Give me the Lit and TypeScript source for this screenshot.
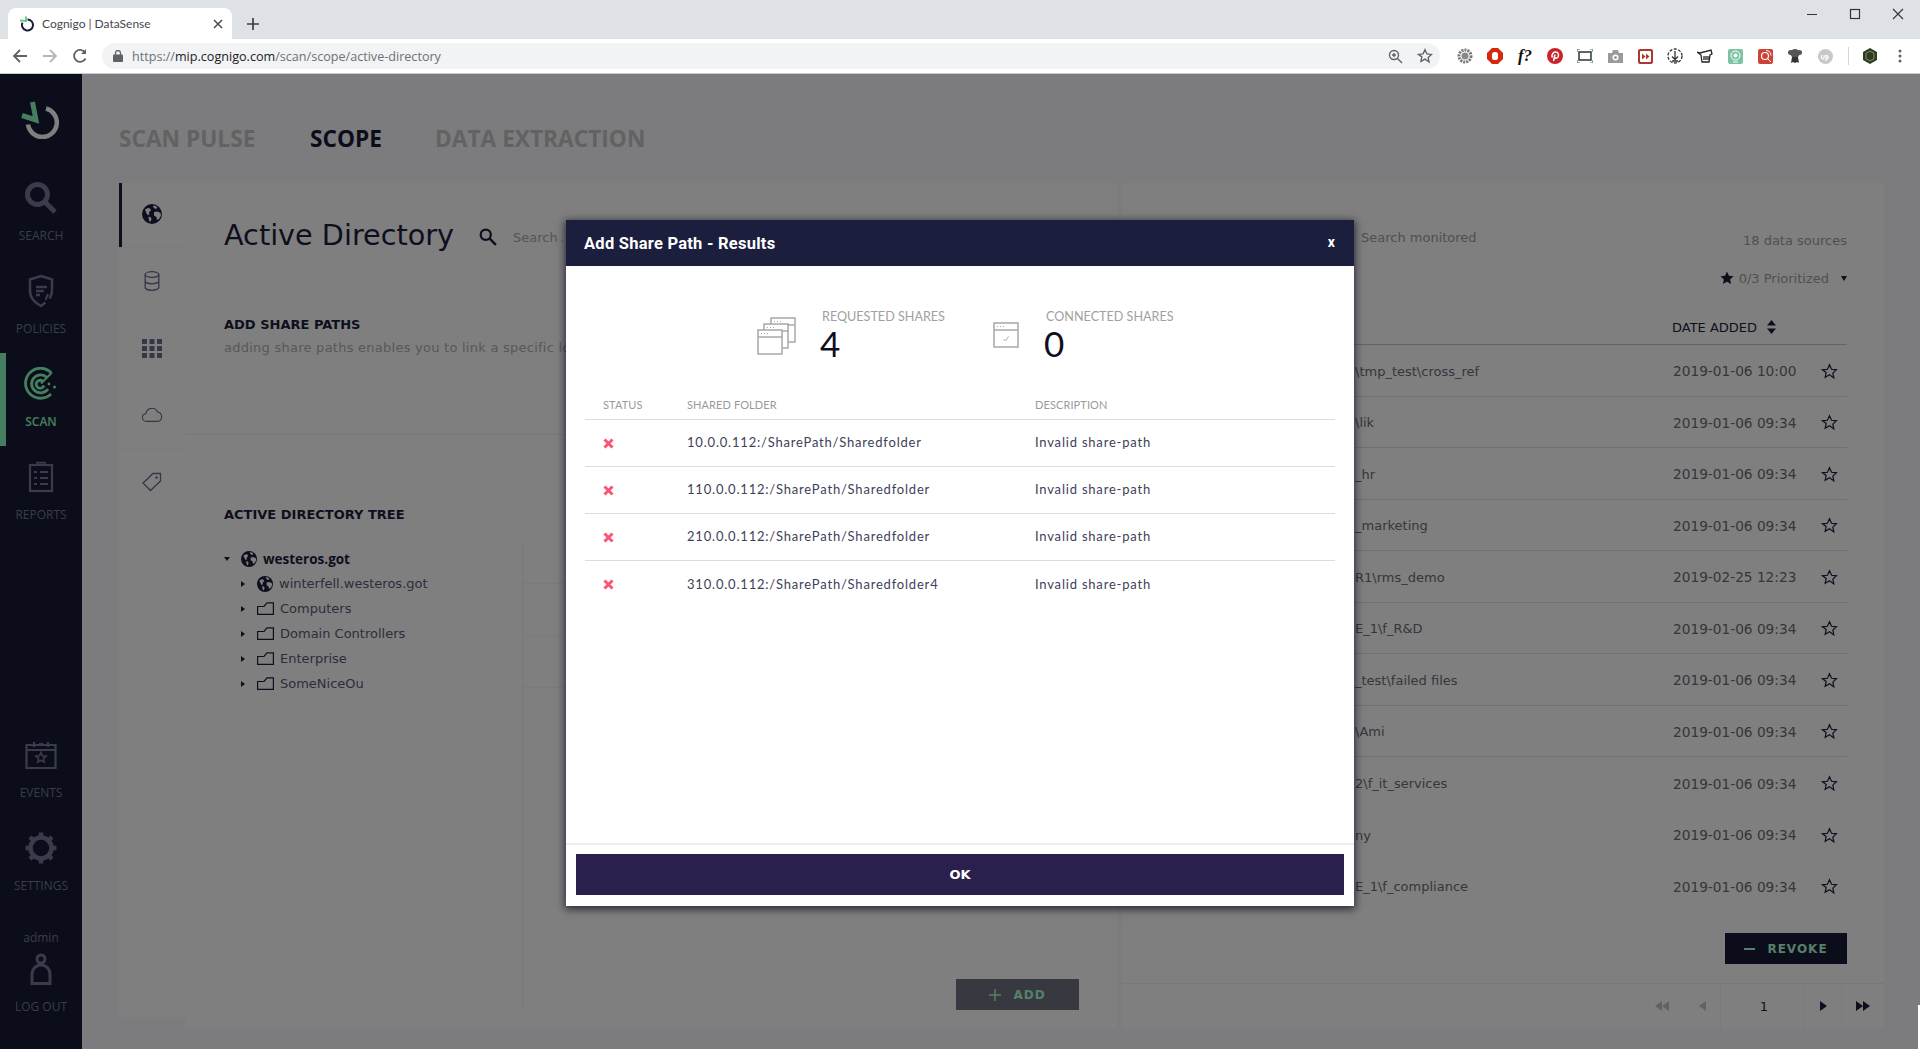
import {LitElement, html, css, svg} from 'lit';
import {customElement} from 'lit/decorators.js';

const globe = (size: number) => html`<svg width=${size} height=${size} viewBox="0 0 20 20">
  <circle cx="10" cy="10" r="10" fill="#1c1e3d"/>
  <path fill="#fff" d="M3 5.500l3-1.500 2 .5 1 2-2 1.500.5 2.500-2 .5-1.500-3zM11 1.500l3 .5 1.500 2-2 1-2-1.500zM12 8l3.500-.5 3 1.500.5 2.500-2 3.500-2 1-.5-3-2.500-1.500zM6.500 12.500l2.500 1 .5 2-1.500 2.500-1-1.500z"/>
</svg>`;

const folder = html`<svg class="folder" width="17" height="13" viewBox="0 0 17 13" fill="none" stroke="#1c1e3d" stroke-width="1.200">
  <path d="M.6 12.400V4.500h6.400L10 .8h6.400v11.600zM.6 4.500h1"/>
</svg>`;

const starOutline = html`<svg width="17" height="17" viewBox="0 0 24 24" fill="none" stroke="#1c1e3d" stroke-width="1.700">
  <path d="M12 2.500l2.900 6.300 6.900.8-5.100 4.700 1.400 6.800L12 16.700l-6.100 3.400 1.400-6.800L2.200 9.600l6.900-.8z"/>
</svg>`;

const windowIcon = (x: number, y: number) => svg`
  <rect x=${x} y=${y} width="24" height="24" fill="#fff" stroke="#a8a8a8" stroke-width="1.500"/>
  <path d="M${x} ${y + 7}h24" stroke="#a8a8a8" stroke-width="1.500"/>
  <path d="M${x + 3} ${y + 3.500}h1M${x + 6} ${y + 3.500}h1M${x + 9} ${y + 3.500}h1" stroke="#a8a8a8"/>`;

const navIcons: Record<string, unknown> = {
  SEARCH: html`<svg width="34" height="34" viewBox="0 0 34 34" fill="none" stroke="#74789a">
    <circle cx="13.500" cy="13.500" r="10" stroke-width="5"/><path d="M20 20l11 11" stroke-width="5"/></svg>`,
  POLICIES: html`<svg width="28" height="34" viewBox="0 0 28 34" fill="none" stroke="#74789a" stroke-width="2.500">
    <path d="M14 2l11 3.500v11c0 3-1 5.500-2.500 8M18.500 28.500L14 32C7 28 3 24 3 16.500v-11L14 2"/>
    <path d="M9 13h11M9 17h8M9 21h4"/><path d="M21 20l-2.500 6" stroke-width="2"/></svg>`,
  SCAN: html`<svg width="34" height="34" viewBox="0 0 34 34" fill="none" stroke="#8cffbe" stroke-width="2.800">
    <path d="M27 5.500A15 15 0 1 0 27 27"/><path d="M23 10.500A9 9 0 1 0 24 22"/><path d="M19.500 15A4 4 0 1 0 20 18.500"/>
    <path d="M17 16.500l11-11" stroke-width="2"/><circle cx="25" cy="17" r="1.400" fill="#8cffbe" stroke="none"/>
    <circle cx="30.500" cy="20" r="1.500" fill="#8cffbe" stroke="none"/></svg>`,
  REPORTS: html`<svg width="26" height="32" viewBox="0 0 26 32" fill="none" stroke="#74789a" stroke-width="2.200">
    <rect x="2" y="4" width="22" height="26"/><path d="M9 3.500h8V1.500H9z" stroke-width="1.500"/>
    <path d="M6 11h3M12 11h8M6 17h3M12 17h8M6 23h3M12 23h8" stroke-width="2.200"/></svg>`,
  EVENTS: html`<svg width="32" height="28" viewBox="0 0 32 28" fill="none" stroke="#74789a" stroke-width="2.200">
    <path d="M1.500 27V4h29v23zM1.500 9h29"/><path d="M9 1v5M23 1v5M14 3h4"/>
    <path d="M16 11.500l1.500 3.300 3.600.4-2.700 2.400.8 3.500-3.200-1.800-3.200 1.800.8-3.500-2.700-2.400 3.600-.4z" stroke-width="1.600"/></svg>`,
  SETTINGS: html`<svg width="32" height="32" viewBox="0 0 32 32" fill="none" stroke="#74789a">
    <circle cx="16" cy="16" r="10.500" stroke-width="4.500"/>
    <path d="M16 .5v5M16 26.500v5M.5 16h5M26.500 16h5M5 5l3.500 3.500M23.500 23.500L27 27M27 5l-3.500 3.500M8.500 23.500L5 27" stroke-width="4.500"/></svg>`,
};

const rows = [
  ['\\tmp_test\\cross_ref', '2019-01-06 10:00'],
  ['\\lik', '2019-01-06 09:34'],
  ['_hr', '2019-01-06 09:34'],
  ['_marketing', '2019-01-06 09:34'],
  ['R1\\rms_demo', '2019-02-25 12:23'],
  ['E_1\\f_R&D', '2019-01-06 09:34'],
  ['_test\\failed files', '2019-01-06 09:34'],
  ['\\Ami', '2019-01-06 09:34'],
  ['2\\f_it_services', '2019-01-06 09:34'],
  ['ny', '2019-01-06 09:34'],
  ['E_1\\f_compliance', '2019-01-06 09:34'],
];

const results = [
  '10.0.0.112:/SharePath/Sharedfolder',
  '110.0.0.112:/SharePath/Sharedfolder',
  '210.0.0.112:/SharePath/Sharedfolder',
  '310.0.0.112:/SharePath/Sharedfolder4',
];

@customElement('app-root')
export class AppRoot extends LitElement {

  static override styles = css`
    :host {
      display: block;
      position: relative;
      width: 1920px;
      height: 1049px;
      overflow: hidden;
      font-family: "DejaVu Sans", sans-serif;
      color: #1c1e3d;
      background: #f8f8ff;
    }

    /* browser chrome */
    .tabstrip {
      display: flex;
      align-items: flex-end;
      height: 39px;
      padding-left: 8px;
      background: #dee1e6;
      position: relative;
    }
    .tab {
      display: flex;
      align-items: center;
      width: 224px;
      height: 31px;
      box-sizing: border-box;
      padding: 0 9px 0 11px;
      background: #fff;
      border-radius: 8px 8px 0 0;
      font: 12px "Lato", sans-serif;
      color: #45484d;
    }
    .tab span { flex: 1; margin-left: 7px; }
    .newtab { margin: 0 0 9px 15px; }
    .winctl {
      display: flex;
      gap: 29px;
      margin-left: auto;
      align-self: flex-start;
      margin-top: 8px;
      padding-right: 15px;
    }
    .toolbar {
      display: flex;
      align-items: center;
      height: 34px;
      padding-left: 12px;
      background: #fff;
      border-bottom: 1px solid #c9cacc;
    }
    .navbtns { display: flex; gap: 14px; }
    .omnibox {
      display: flex;
      align-items: center;
      width: 1338px;
      height: 26px;
      margin-left: 14px;
      padding: 0 7px 0 11px;
      box-sizing: border-box;
      border-radius: 13px;
      background: #f1f3f4;
      font: 12.600px "Open Sans", sans-serif;
      color: #6e7175;
    }
    .omnibox .url { flex: 1; margin-left: 9px; }
    .omnibox b { font-weight: 400; color: #202124; }
    .omnibox .zoom { margin-right: 14px; }
    .exts { display: flex; align-items: center; margin-left: 10px; }
    .ext { display: flex; justify-content: center; align-items: center; width: 30px; height: 30px; font: italic bold 17px "Liberation Serif", serif; color: #111; }
    .sep { width: 1px; height: 18px; margin: 0 6px 0 8px; background: #d5d6d8; }

    /* app */
    .app { display: flex; height: 975px; }
    .nav {
      flex: none;
      width: 82px;
      display: flex;
      flex-direction: column;
      align-items: stretch;
      background: #161a34;
      color: #74789a;
      font: 12px "Open Sans", sans-serif;
      text-align: center;
    }
    .logo { display: flex; justify-content: center; height: 93px; padding: 27px 2px 0 0; box-sizing: border-box; }
    .nav-item {
      display: flex;
      flex-direction: column;
      align-items: center;
      height: 93px;
      box-sizing: border-box;
      padding-top: 12px;
    }
    .nav-item .ic { display: flex; align-items: center; justify-content: center; height: 38px; margin-bottom: 10px; }
    .nav-item.active { color: #8cffbe; border-left: 6px solid #8cffbe; padding-right: 6px; font-weight: 600; }
    .nav-gap { height: 185px; flex: none; }
    .user { display: flex; flex-direction: column; align-items: center; margin-top: 19px; }
    .user svg { margin: 7px 0 13px; }

    .main { flex: 1; padding: 48px 36px 0 37px; min-width: 0; }
    .htabs { display: flex; height: 34px; margin-bottom: 27px; font: 700 22.700px/34px "Open Sans", sans-serif; color: #c4c4c4; }
    .htabs div:nth-child(1) { width: 191px; }
    .htabs div:nth-child(2) { width: 125px; color: #161a34; }
    .content { display: flex; gap: 5px; }
    .leftgroup { display: flex; width: 998px; }
    .vtabs { flex: none; width: 66px; height: 834px; display: flex; flex-direction: column; gap: 1px; }
    .vtab { display: flex; align-items: center; justify-content: center; height: 66px; background: #fefefe; box-sizing: border-box; }
    .vtab.active { height: 64px; background: #fff; border-left: 3px solid #1c1e3d; padding: 0 3px 2px 0; }
    .vtab:last-child { flex: 1; align-items: flex-start; padding-top: 23px; }
    .panel { background: #fff; height: 845px; box-sizing: border-box; }
    .leftpanel { width: 932px; padding: 34px 38px 0 39px; }
    .titlerow { display: flex; align-items: center; height: 36px; }
    h1 { margin: 0; font: 400 28.700px/36px "DejaVu Sans", sans-serif; }
    .titlerow svg { margin: 4px 16px 0 25px; }
    .titlerow span { width: 50px; overflow: hidden; white-space: nowrap; font-size: 13px; color: #aaa; margin-top: 4px; }
    h2 { margin: 63px 0 0; font: 700 13px/18px "DejaVu Sans", sans-serif; }
    .desc { width: 342px; overflow: hidden; margin-top: 4px; font-size: 13px; line-height: 20px; letter-spacing: .25px; color: #b0b0b0; white-space: nowrap; }
    .divider { margin: 76px -38px 0 -39px; border-top: 1px solid #f0f0f0; }
    h2.tree-h { margin-top: 71px; }
    .treewrap { display: flex; height: 470px; margin-top: 16px; }
    .tree { flex: none; width: 298px; padding-top: 6px; font-size: 13px; color: #5c5a76; box-sizing: border-box; }
    .tnode { display: flex; align-items: center; height: 25px; padding-left: 16px; }
    .tnode.root { padding-left: 0; font: 700 13.500px "Open Sans", sans-serif; color: #1c1e3d; }
    .tnode .arr { width: 0; height: 0; margin: 0 12px 0 1px; border-left: 4px solid #1c1e3d; border-top: 3px solid transparent; border-bottom: 3px solid transparent; }
    .tnode.root .arr { margin: 0 11px 0 0; border-left: 3px solid transparent; border-right: 3px solid transparent; border-top: 4px solid #1c1e3d; border-bottom: 0; }
    .tnode svg { margin-right: 6px; flex: none; }
    .treeright { flex: 1; display: flex; flex-direction: column; border-left: 1px solid #f0f0f0; }
    .tick { height: 51px; border-bottom: 1px solid #f4f4f4; }
    .tick:first-child { height: 43px; }
    .btn {
      display: flex;
      align-items: center;
      justify-content: center;
      gap: 12px;
      font: 700 12px/1 "DejaVu Sans", sans-serif;
      letter-spacing: 1px;
      color: #b0ffd2;
    }
    .add { margin-top: auto; align-self: flex-end; width: 123px; height: 31px; background: #6f7080; }
    .rightpanel { display: flex; flex-direction: column; width: 762px; padding: 45px 0 0 28px; }
    .inner { padding-right: 37px; }
    .toprow { display: flex; justify-content: space-between; height: 24px; align-items: center; font-size: 13px; color: #a0a0a0; }
    .toprow .s { margin: 0 0 6px 211px; }
    .prio { display: flex; justify-content: flex-end; align-items: center; height: 20px; margin-top: 16px; font-size: 13px; color: #a0a0a0; }
    .prio span { margin: 0 12px 0 5px; }
    .prio i { width: 0; height: 0; border-left: 3px solid transparent; border-right: 3px solid transparent; border-top: 5px solid #1c1e3d; }
    .thead { display: flex; justify-content: flex-start; align-items: center; height: 34px; margin-top: 22px; padding-left: 522px; border-bottom: 1px solid #c8c8c8; font-size: 13px; font-weight: 500; white-space: nowrap; }
    .thead svg { margin-left: 10px; }
    .row { display: flex; align-items: center; height: 51.500px; box-sizing: border-box; padding-top: 2px; border-bottom: 1px solid #e0e0e0; font-size: 13px; color: #6c6c78; }
    .row:nth-child(n+12) { border-bottom: 0; }
    .row .name { flex: 1; padding-left: 205px; }
    .row .date { width: 148px; font-size: 13.700px; }
    .row svg { margin-right: 9px; }
    .revoke { margin: 21.500px 0 0 auto; width: 122px; height: 31px; background: #161a34; }
    .pager { display: flex; justify-content: flex-end; height: 44px; margin: auto 0 0 -28px; border-top: 1px solid #f0f0f0; font-size: 13px; }
    .pager div { display: flex; align-items: center; justify-content: center; border-left: 1px solid #f4f4f4; width: 42px; }
    .pager div:nth-child(2), .pager div:nth-child(4) { width: 36px; }
    .pager div:nth-child(3) { width: 84px; padding-left: 3px; box-sizing: border-box; }
    .pager .off { opacity: .25; }

    /* dialog */
    .backdrop { position: absolute; left: 0; right: 0; top: 74px; bottom: 0; background: rgba(0, 0, 0, .5); }
    .cursor { position: absolute; right: 0; top: 1005px; width: 2px; height: 44px; background: #fff; }
    .modal {
      position: absolute;
      left: 566px;
      top: 220px;
      width: 788px;
      height: 686px;
      display: flex;
      flex-direction: column;
      background: #fff;
      box-shadow: 0 2px 8px 1px rgba(10, 10, 30, .75);
    }
    .m-head {
      display: flex;
      align-items: center;
      justify-content: space-between;
      flex: none;
      height: 46px;
      padding: 0 19px 0 18px;
      background: #1c1e3d;
      color: #fff;
      font: 700 16.500px "Roboto", sans-serif;
      letter-spacing: .25px;
    }
    .m-head span:last-child { font-size: 14px; margin-bottom: 3px; }
    .stats { display: flex; height: 55px; margin-top: 43px; padding-left: 191px; }
    .stat { display: flex; }
    .stat svg { flex: none; }
    .stat .lab { font: 400 12.600px/16px "Lato", sans-serif; color: #a0a0a0; white-space: nowrap; }
    .stat .num { font: 400 35px/38px "Lato", sans-serif; color: #0e1020; margin: -1px 0 0 -2px; }
    .s1 { width: 236px; }
    .s1 svg { margin: 8px 25px 0 0; }
    .s2 svg { margin: 13px 27px 0 0; }
    .m-table { margin: 34px 19px 0; }
    .m-row {
      display: grid;
      grid-template-columns: 102px 348px 1fr;
      align-items: center;
      height: 47px;
      padding-bottom: 2px;
      box-sizing: border-box;
      border-bottom: 1px solid #dcdcdc;
      font: 400 13px "Lato", sans-serif;
      letter-spacing: .8px;
      color: #3d3f58;
    }
    .m-row svg { display: block; margin-top: 2px; }
    .m-row:last-child { border-bottom: 0; }
    .m-row.hd { height: 22px; padding-bottom: 0; align-items: start; font: 400 11px/14px "Lato", sans-serif; letter-spacing: .1px; color: #9a9a9a; }
    .m-row > :first-child { padding-left: 18px; }
    .m-foot { margin-top: auto; padding: 9px 10px 11px; border-top: 2px solid #eee; }
    .ok {
      display: flex;
      align-items: center;
      justify-content: center;
      height: 41px;
      background: #2a1f4d;
      color: #fff;
      font: 700 13px "DejaVu Sans", sans-serif;
    }
  `;

  private renderNav(label: string, active = false) {
    return html`<div class="nav-item ${active ? 'active' : ''}">
      <div class="ic">${navIcons[label]}</div>${label}
    </div>`;
  }

  protected override render() {
    return html`
      <div class="tabstrip">
        <div class="tab">
          <svg width="16" height="16" viewBox="0 0 16 16" fill="none">
            <path d="M8.500 3.500a5.500 5.500 0 1 1-5 3.200" stroke="#1c1e3d" stroke-width="2"/>
            <path d="M1 4.500l6 .5V.5" stroke="#5ecf8f" stroke-width="2"/>
          </svg>
          <span>Cognigo | DataSense</span>
          <svg width="10" height="10" viewBox="0 0 10 10" stroke="#45484d" stroke-width="1.500"><path d="M1 1l8 8M9 1l-8 8"/></svg>
        </div>
        <svg class="newtab" width="12" height="12" viewBox="0 0 12 12" stroke="#3c4043" stroke-width="1.700"><path d="M6 0v12M0 6h12"/></svg>
        <div class="winctl">
          <svg width="14" height="12" viewBox="0 0 14 12" stroke="#333" stroke-width="1"><path d="M2 6.500h10"/></svg>
          <svg width="14" height="12" viewBox="0 0 14 12" fill="none" stroke="#333" stroke-width="1.200"><rect x="2.500" y="1.500" width="9" height="9"/></svg>
          <svg width="14" height="12" viewBox="0 0 14 12" stroke="#333" stroke-width="1.100"><path d="M2 1l10 10M12 1L2 11"/></svg>
        </div>
      </div>
      <div class="toolbar">
        <div class="navbtns">
          <svg width="16" height="16" viewBox="0 0 16 16" fill="none" stroke="#5f6368" stroke-width="1.800"><path d="M15 8H2M8 2L2 8l6 6"/></svg>
          <svg width="16" height="16" viewBox="0 0 16 16" fill="none" stroke="#b5b7ba" stroke-width="1.800"><path d="M1 8h13M8 2l6 6-6 6"/></svg>
          <svg width="16" height="16" viewBox="0 0 16 16" fill="none" stroke="#5f6368" stroke-width="1.800"><path d="M13.500 10.500A6 6 0 1 1 13 4.500"/><path d="M14 1v5h-5" fill="#5f6368" stroke="none"/></svg>
        </div>
        <div class="omnibox">
          <svg width="10" height="12" viewBox="0 0 10 12"><rect y="4.500" width="10" height="7.500" rx="1" fill="#5f6368"/><path d="M2.500 5V3a2.500 2.500 0 0 1 5 0v2" fill="none" stroke="#5f6368" stroke-width="1.300"/></svg>
          <span class="url">https://<b>mip.cognigo.com</b>/scan/scope/active-directory</span>
          <svg class="zoom" width="15" height="15" viewBox="0 0 15 15" fill="none" stroke="#5f6368" stroke-width="1.400"><circle cx="6" cy="6" r="4.500"/><path d="M9.500 9.500l4.500 4.500M4 6h4M6 4v4"/></svg>
          <svg width="16" height="16" viewBox="0 0 24 24" fill="none" stroke="#5f6368" stroke-width="2"><path d="M12 2.500l2.900 6.300 6.900.8-5.100 4.700 1.400 6.800L12 16.700l-6.100 3.400 1.400-6.800L2.200 9.600l6.900-.8z"/></svg>
        </div>
        <div class="exts">
          <div class="ext"><svg width="16" height="16" viewBox="0 0 16 16"><circle cx="8" cy="8" r="6" fill="none" stroke="#777" stroke-width="3" stroke-dasharray="2 1"/><circle cx="8" cy="8" r="3.500" fill="#888"/></svg></div>
          <div class="ext"><svg width="16" height="16" viewBox="0 0 16 16"><path d="M5 0h6l5 5v6l-5 5H5l-5-5V5z" fill="#d4290e"/><rect x="5" y="4" width="6" height="8" rx="2.500" fill="#fff"/></svg></div>
          <div class="ext">f?</div>
          <div class="ext"><svg width="16" height="16" viewBox="0 0 16 16"><circle cx="8" cy="8" r="8" fill="#c9242b"/><path d="M5.500 9.500C4 7 6 4 8.500 4c3 0 3.500 3 2.500 5-.8 1.500-2.800 1.500-3 .5M8 6.500L6.500 13" fill="none" stroke="#fff" stroke-width="1.500"/></svg></div>
          <div class="ext"><svg width="16" height="14" viewBox="0 0 16 14" fill="none"><rect x="2" y="3" width="12" height="8" stroke="#333" stroke-width="1.500"/><path d="M0 3V0h3M13 0h3v3M0 11v3h3M16 11v3h-3" stroke="#3a8a3a" stroke-width="1.200"/></svg></div>
          <div class="ext"><svg width="15" height="13" viewBox="0 0 15 13"><path d="M0 3h4l1-3h5l1 3h4v10H0z" fill="#9a9a9a"/><circle cx="7.500" cy="7.500" r="3" fill="#fff"/><circle cx="7.500" cy="7.500" r="1.500" fill="#9a9a9a"/></svg></div>
          <div class="ext"><svg width="15" height="15" viewBox="0 0 15 15"><rect width="15" height="15" rx="2" fill="#a83a30"/><rect x="2" y="2" width="11" height="11" rx="1" fill="#fff"/><path d="M4 4.500l3.500 3-3.500 3zM8 4.500l3.500 3-3.500 3z" fill="#a83a30"/></svg></div>
          <div class="ext"><svg width="16" height="16" viewBox="0 0 16 16" fill="none" stroke="#333" stroke-width="1.300"><circle cx="8" cy="8" r="7" stroke-dasharray="3 1.500"/><path d="M8 3v8M5 8.500l3 3 3-3M5 13h6"/></svg></div>
          <div class="ext"><svg width="16" height="14" viewBox="0 0 16 14" fill="none" stroke="#222" stroke-width="1.300"><path d="M0 3l3 1 11-3 1 4-2 1-1 7H5L4 6z"/><path d="M7 7v4M9 7v4M11 7v4"/></svg></div>
          <div class="ext"><svg width="15" height="15" viewBox="0 0 15 15"><rect width="15" height="15" rx="2" fill="#7cc4a4"/><circle cx="7.500" cy="6.500" r="4.500" fill="none" stroke="#fff"/><circle cx="7.500" cy="6.500" r="2" fill="#fff"/><path d="M5 13h5" stroke="#fff"/></svg></div>
          <div class="ext"><svg width="15" height="15" viewBox="0 0 15 15"><rect width="15" height="15" rx="2" fill="#cb4437"/><circle cx="7" cy="7" r="3.500" fill="none" stroke="#fff" stroke-width="1.200"/><path d="M9.500 9.500L13 13M8 1.500c3 0 5 2 5 5" stroke="#fff" fill="none"/></svg></div>
          <div class="ext"><svg width="16" height="16" viewBox="0 0 16 16" fill="#555"><circle cx="8" cy="5.500" r="4.500"/><circle cx="3.500" cy="4.500" r="2.500"/><circle cx="12.500" cy="4.500" r="2.500"/><path d="M5 9h6l1 6-2-1-2 1-2-1-2 1z" fill="#333"/></svg></div>
          <div class="ext"><svg width="15" height="15" viewBox="0 0 15 15"><circle cx="7.500" cy="7.500" r="7.500" fill="#c8c8c8"/><path d="M3.500 6v2.500a1.300 1.300 0 0 0 2.600 0V6M8 6v6M8 7a1.500 1.500 0 1 1 0 2.500" fill="none" stroke="#fff" stroke-width="1.200"/></svg></div>
          <div class="sep"></div>
          <div class="ext"><svg width="14" height="16" viewBox="0 0 14 16"><path d="M7 0l7 4v8l-7 4-7-4V4z" fill="#2e3b26"/><path d="M7 3l4 2.300v5.400L7 13l-4-2.300V5.300z" fill="none" stroke="#7a9a3a"/></svg></div>
          <div class="ext"><svg width="4" height="14" viewBox="0 0 4 14" fill="#5f6368"><circle cx="2" cy="2" r="1.500"/><circle cx="2" cy="7" r="1.500"/><circle cx="2" cy="12" r="1.500"/></svg></div>
        </div>
      </div>

      <div class="app">
        <div class="nav">
          <div class="logo">
            <svg width="38" height="38" viewBox="0 0 38 38" fill="none">
              <path d="M25 7.500a14.500 14.500 0 1 1-18 16" stroke="#fff" stroke-width="4.500"/>
              <path d="M1 14.500l14 4.500L11.500 1" stroke="#8cffbe" stroke-width="5"/>
            </svg>
          </div>
          ${this.renderNav('SEARCH')}
          ${this.renderNav('POLICIES')}
          ${this.renderNav('SCAN', true)}
          ${this.renderNav('REPORTS')}
          <div class="nav-gap"></div>
          ${this.renderNav('EVENTS')}
          ${this.renderNav('SETTINGS')}
          <div class="user">
            admin
            <svg width="22" height="32" viewBox="0 0 22 32" fill="none" stroke="#74789a" stroke-width="3"><circle cx="11" cy="6" r="4"/><path d="M2 30.500V21a9 9 0 0 1 18 0v9.500z"/></svg>
            LOG OUT
          </div>
        </div>

        <div class="main">
          <div class="htabs"><div>SCAN PULSE</div><div>SCOPE</div><div>DATA EXTRACTION</div></div>
          <div class="content">
            <div class="leftgroup">
              <div class="vtabs">
                <div class="vtab active">${globe(20)}</div>
                <div class="vtab"><svg width="16" height="20" viewBox="0 0 16 20" fill="none" stroke="#6a6c8c" stroke-width="1.300"><ellipse cx="8" cy="3.500" rx="6.800" ry="2.800"/><path d="M1.200 3.500v13c0 1.500 3 2.800 6.800 2.800s6.800-1.300 6.800-2.800v-13M1.200 10c0 1.500 3 2.800 6.800 2.800s6.800-1.300 6.800-2.800"/></svg></div>
                <div class="vtab"><svg width="20" height="19" viewBox="0 0 20 19" fill="#6a6c8c"><path d="M0 0h5v5H0zM7.500 0h5v5h-5zM15 0h5v5h-5zM0 7h5v5H0zM7.500 7h5v5h-5zM15 7h5v5h-5zM0 14h5v5H0zM7.500 14h5v5h-5zM15 14h5v5h-5z"/></svg></div>
                <div class="vtab"><svg width="21" height="14" viewBox="0 0 21 14" fill="none" stroke="#6a6c8c" stroke-width="1.100"><path d="M5 13.400H4.500a3.900 3.900 0 0 1-.5-7.800A6 6 0 0 1 15.500 4a4.800 4.800 0 0 1 .5 9.400z"/></svg></div>
                <div class="vtab"><svg width="20" height="20" viewBox="0 0 20 20" fill="none" stroke="#6a6c8c" stroke-width="1.300"><path d="M11 1.500h7.500V9L8.500 18.500 1 11z"/><circle cx="14.500" cy="5.500" r="1.200" fill="#6a6c8c" stroke="none"/></svg></div>
              </div>
              <div class="panel leftpanel">
                <div class="titlerow">
                  <h1>Active Directory</h1>
                  <svg width="18" height="18" viewBox="0 0 16 16" fill="none" stroke="#1c1e3d"><circle cx="6" cy="6" r="4.500" stroke-width="2"/><path d="M9.500 9.500l5.500 5.500" stroke-width="2.200"/></svg>
                  <span>Search Active Directory</span>
                </div>
                <h2>ADD SHARE PATHS</h2>
                <div class="desc">adding share paths enables you to link a specific location</div>
                <div class="divider"></div>
                <h2 class="tree-h">ACTIVE DIRECTORY TREE</h2>
                <div class="treewrap">
                  <div class="tree">
                    <div class="tnode root"><i class="arr"></i>${globe(16)}westeros.got</div>
                    <div class="tnode"><i class="arr"></i>${globe(16)}winterfell.westeros.got</div>
                    ${['Computers', 'Domain Controllers', 'Enterprise', 'SomeNiceOu'].map(n => html`
                      <div class="tnode"><i class="arr"></i>${folder}${n}</div>`)}
                  </div>
                  <div class="treeright">
                    <div class="tick"></div><div class="tick"></div><div class="tick"></div>
                    <div class="btn add">
                      <svg width="12" height="12" viewBox="0 0 12 12" stroke="#b0ffd2" stroke-width="1.500"><path d="M6 0v12M0 6h12"/></svg>ADD
                    </div>
                  </div>
                </div>
              </div>
            </div>

            <div class="panel rightpanel">
              <div class="inner">
                <div class="toprow"><span class="s">Search monitored</span><span>18 data sources</span></div>
                <div class="prio">
                  <svg width="14" height="14" viewBox="0 0 24 24" fill="#1c1e3d"><path d="M12 1l3.300 7.300 7.900.9-5.900 5.300 1.700 7.800L12 18.300l-7 4 1.700-7.800L.8 9.200l7.900-.9z"/></svg>
                  <span>0/3 Prioritized</span><i></i>
                </div>
                <div class="thead">DATE ADDED
                  <svg width="9" height="14" viewBox="0 0 9 14" fill="#1c1e3d"><path d="M4.500 0L9 5.500H0zM0 8.500h9L4.500 14z"/></svg>
                </div>
                ${rows.map(([name, date]) => html`
                  <div class="row"><div class="name">${name}</div><div class="date">${date}</div>${starOutline}</div>`)}
              </div>
              <div class="inner">
                <div class="btn revoke"><svg width="11" height="2" viewBox="0 0 11 2"><rect width="11" height="2" fill="#b0ffd2"/></svg>REVOKE</div>
              </div>
              <div class="pager">
                <div class="off"><svg width="14" height="10" viewBox="0 0 14 10" fill="#1c1e3d"><path d="M7 0v10L0 5zM14 0v10L7 5z"/></svg></div>
                <div class="off"><svg width="7" height="10" viewBox="0 0 7 10" fill="#1c1e3d"><path d="M7 0v10L0 5z"/></svg></div>
                <div>1</div>
                <div><svg width="7" height="10" viewBox="0 0 7 10" fill="#1c1e3d"><path d="M0 0v10l7-5z"/></svg></div>
                <div><svg width="14" height="10" viewBox="0 0 14 10" fill="#1c1e3d"><path d="M0 0v10l7-5zM7 0v10l7-5z"/></svg></div>
              </div>
            </div>
          </div>
        </div>
      </div>

      <div class="backdrop"></div>
      <div class="cursor"></div>

      <div class="modal">
        <div class="m-head"><span>Add Share Path - Results</span><span>x</span></div>
        <div class="stats">
          <div class="stat s1">
            <svg width="40" height="38" viewBox="0 0 40 38">${windowIcon(14, 1)}${windowIcon(7, 7)}${windowIcon(1, 13)}</svg>
            <div><div class="lab">REQUESTED SHARES</div><div class="num">4</div></div>
          </div>
          <div class="stat s2">
            <svg width="26" height="26" viewBox="0 0 26 26">${windowIcon(1, 1)}<path d="M10.500 17l2 2 3-4.500" fill="none" stroke="#a8a8a8"/></svg>
            <div><div class="lab">CONNECTED SHARES</div><div class="num">0</div></div>
          </div>
        </div>
        <div class="m-table">
          <div class="m-row hd"><div>STATUS</div><div>SHARED FOLDER</div><div>DESCRIPTION</div></div>
          ${results.map(path => html`
            <div class="m-row">
              <div><svg width="11" height="11" viewBox="0 0 11 11" stroke="#ff5277" stroke-width="3"><path d="M1.500 1.500l8 8M9.500 1.500l-8 8"/></svg></div>
              <div>${path}</div>
              <div>Invalid share-path</div>
            </div>`)}
        </div>
        <div class="m-foot"><div class="ok">OK</div></div>
      </div>
    `;
  }
}

declare global {
  interface HTMLElementTagNameMap {
    'app-root': AppRoot;
  }
}
